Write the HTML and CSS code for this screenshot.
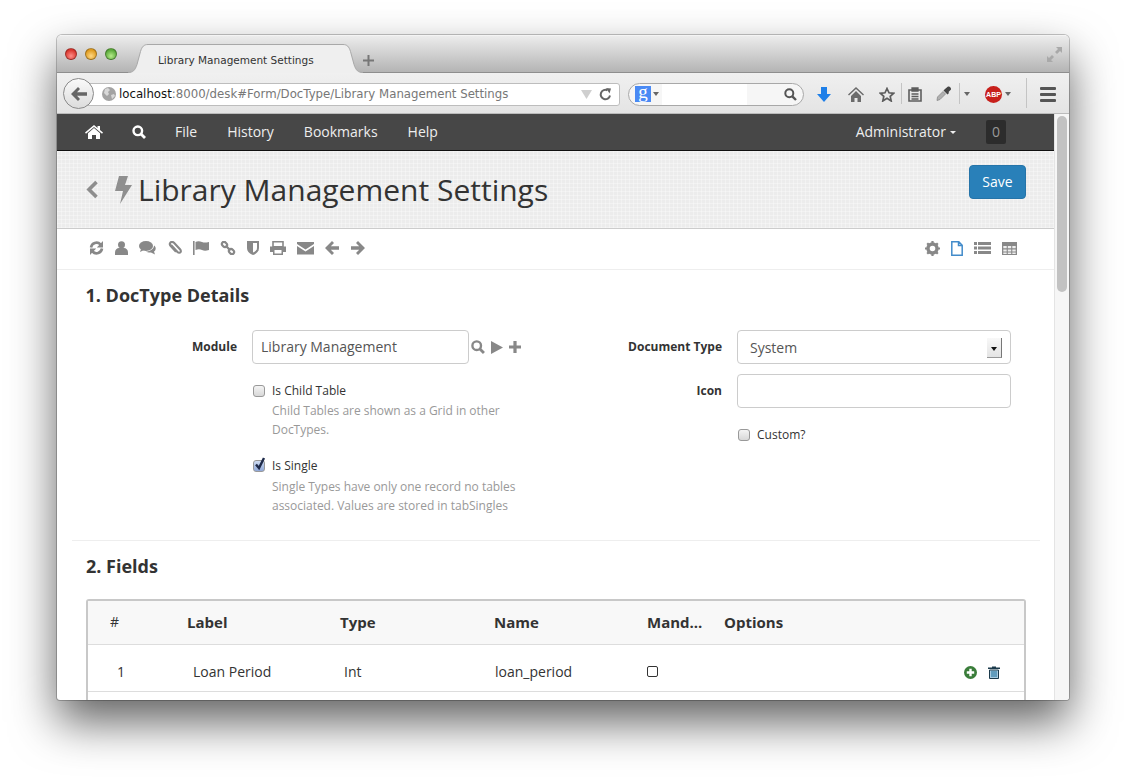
FILE: index.html
```html
<!DOCTYPE html>
<html lang="en">
<head>
  <meta charset="UTF-8">
  <title>Library Management Settings</title>
  <link rel="stylesheet" href="styles.css">
</head>
<body>
<div class="window">

  <div class="titlebar">
    <div class="lights">
      <span class="light red"></span>
      <span class="light yellow"></span>
      <span class="light green"></span>
    </div>
    <div class="tab">
      <svg class="tab-curve" width="20" height="29" viewBox="0 0 20 29"><path d="M0 28.500c5 0 7-2 9-8l3.500-13c1.500-5 3.500-7 7.500-7V29H0z" fill="#efefef"/><path d="M0 28.500c5 0 7-2 9-8l3.500-13c1.500-5 3.500-7 7.500-7" fill="none" stroke="#a8a8a8"/></svg>
      <span class="tab-title">Library Management Settings</span>
      <svg class="tab-curve" width="20" height="29" viewBox="0 0 20 29"><path d="M20 28.500c-5 0-7-2-9-8L7.500 7.500C6 2.500 4 .5 0 .5V29h20z" fill="#efefef"/><path d="M20 28.500c-5 0-7-2-9-8L7.500 7.500C6 2.500 4 .5 0 .5" fill="none" stroke="#a8a8a8"/></svg>
    </div>
    <svg class="tab-plus" width="11" height="11" viewBox="0 0 11 11"><path d="M5.500 0v11M0 5.500h11" stroke="#777" stroke-width="2"/></svg>
    <svg class="expand" width="15" height="15" viewBox="0 0 15 15"><path d="M9 0h6v6l-2-2-3 3-2-2 3-3zM6 15H0V9l2 2 3-3 2 2-3 3z" fill="#a9a9a9"/></svg>
  </div>

  <div class="browserbar">
    <div class="back">
      <svg width="16" height="14" viewBox="0 0 16 14"><path d="M7 0l2 2-3 3.300h10v3.400H6l3 3.300-2 2L0 7z" fill="#666"/></svg>
    </div>
    <div class="urlbar">
      <svg class="globe" width="14" height="14" viewBox="0 0 14 14"><circle cx="7" cy="7" r="7" fill="#a3a3a3"/><path d="M3 2l3-1 2 2-2 2 1 2-2 2-3-3zM9 8l3-1 1 2-3 3z" fill="#d8d8d8"/></svg>
      <span class="url"><b>localhost</b>:8000/desk#Form/DocType/Library Management Settings</span>
      <span class="url-end">
        <svg width="11" height="9" viewBox="0 0 11 9"><path d="M0 0h11L5.500 9z" fill="#cfcfcf"/></svg>
        <svg width="13" height="13" viewBox="0 0 13 13"><path d="M11 7.500A4.700 4.700 0 1 1 8.500 2.300" fill="none" stroke="#666" stroke-width="2"/><path d="M7 0l5 .5-1.500 5z" fill="#666"/></svg>
      </span>
    </div>
    <div class="searchbar">
      <span class="g-icon">g</span>
      <span class="caret"></span>
      <span class="search-blank"></span>
      <svg class="search-mag" width="13" height="13" viewBox="0 0 13 13"><circle cx="5.300" cy="5.300" r="4" fill="none" stroke="#555" stroke-width="2"/><path d="M8.300 8.300L12 12" stroke="#555" stroke-width="2.400"/></svg>
    </div>
    <div class="bar-icons">
      <svg class="i-down" width="14" height="15" viewBox="0 0 14 15"><path d="M4 0h6v7h4l-7 8-7-8h4z" fill="#1e7fe8"/></svg>
      <svg class="i-home" width="16" height="15" viewBox="0 0 16 15"><path d="M8 0L0 7.500l1 1 7-6.500 7 6.500 1-1zM3 9l5-5 5 5v6H9.500v-4h-3v4H3z" fill="#6b6b6b"/></svg>
      <svg class="i-star" width="16" height="15" viewBox="0 0 16 15"><path d="M8 1.500l2 4.300 4.600.5-3.400 3.100 1 4.600L8 11.200l-4.200 2.800 1-4.600-3.400-3.100 4.600-.5z" fill="none" stroke="#5d5d5d" stroke-width="1.700"/></svg>
      <span class="bar-sep s-one"></span>
      <svg class="i-clip" width="14" height="15" viewBox="0 0 14 15"><path d="M1 3h12v11H1z" fill="none" stroke="#5d5d5d" stroke-width="1.600"/><path d="M4 1h6v3H4zM3.500 7h7M3.500 9.500h7M3.500 12h7" stroke="#5d5d5d" stroke-width="1.300" fill="#5d5d5d"/></svg>
      <svg class="i-drop" width="17" height="15" viewBox="0 0 17 15"><path d="M1 14.500l.5-3.500L7 5.500 9.500 8 4 13.500z" fill="#b0b0b0" stroke="#8a8a8a" stroke-width=".8"/><path d="M9 3l3-2.500c1.500-.5 3.500 1 3 3L12.500 6l.5 1-1.500 1.500L7.500 4.500 9 3z" fill="#444"/></svg>
      <span class="bar-sep s-two"></span>
      <span class="caret c-one"></span>
      <span class="abp">ABP</span>
      <span class="caret c-two"></span>
      <span class="bar-sep s-three"></span>
      <span class="burger"><i></i><i></i><i></i></span>
    </div>
  </div>

  <div class="viewport">
    <div class="page">

      <nav class="navbar">
        <svg class="nav-home" width="18" height="14" viewBox="0 0 18 14"><path d="M9 0L0 7.500l1 1.200L9 2l8 6.700 1-1.200-3-2.500V1h-2.500v1.900zM3 8.300L9 3l6 5.300V14h-4v-4H7v4H3z" fill="#fff"/></svg>
        <svg class="nav-search" width="14" height="14" viewBox="0 0 14 14"><circle cx="5.800" cy="5.800" r="4.300" fill="none" stroke="#fff" stroke-width="2.400"/><path d="M9 9l4 4" stroke="#fff" stroke-width="2.800"/></svg>
        <a class="nav-link">File</a>
        <a class="nav-link">History</a>
        <a class="nav-link">Bookmarks</a>
        <a class="nav-link">Help</a>
        <span class="nav-user">Administrator<span class="nav-caret"></span></span>
        <span class="nav-count">0</span>
      </nav>

      <header class="page-head">
        <svg class="head-back" width="13" height="19" viewBox="0 0 13 19"><path d="M10.500 2L3 9.500l7.500 7.500" fill="none" stroke="#8d8d8d" stroke-width="3.600"/></svg>
        <svg class="head-bolt" width="17" height="28" viewBox="0 0 17 28"><path d="M4 0h9l-3 9h7L5 28l3-13H0z" fill="#8f8f8f"/></svg>
        <h1>Library Management Settings</h1>
        <button class="btn-save">Save</button>
      </header>

      <div class="tools">
        <div class="tool-group">
          <svg width="15" height="14" viewBox="0 0 15 14"><path d="M2 6.500A5.500 5.500 0 0 1 11.500 3.500M13 7.500A5.500 5.500 0 0 1 3.500 10.500" fill="none" stroke="#888" stroke-width="2.600"/><path d="M14 0v6.500H7.800zM1 14V7.500h6.200z" fill="#888"/></svg>
          <svg width="13" height="14" viewBox="0 0 13 14"><circle cx="6.500" cy="3.800" r="3.500" fill="#888"/><path d="M0 14v-2.500C0 8.500 2 7 4 7h5c2 0 4 1.500 4 4.500V14z" fill="#888"/></svg>
          <svg width="17" height="14" viewBox="0 0 17 14"><ellipse cx="7" cy="5" rx="7" ry="5" fill="#888"/><path d="M2 8l-1 3 4-2z" fill="#888"/><path d="M15 4.500c2 1 2.500 4.500 0 6l1 3-4-2c-2 .2-4-.3-5-1 4 0 8-2.500 8-6z" fill="#888"/></svg>
          <svg width="15" height="14" viewBox="0 0 15 14"><path d="M4 4l6.500 7c1 1 2.500 1 3 .2.700-1 .3-2-.5-3L7 1.800C6 .8 4.500.6 3.500 1.500c-.9 1-.8 2.300 0 3.200l5.500 6" fill="none" stroke="#888" stroke-width="2.100"/></svg>
          <svg width="16" height="14" viewBox="0 0 16 14"><path d="M0 0h1.600v14H0z" fill="#888"/><path d="M2.500 1c2-1 4-1 6.500 0s4 .5 7 0v8c-3 1-5 1-7 0s-4-1-6.500 0z" fill="#888"/></svg>
          <svg width="16" height="14" viewBox="0 0 16 14"><path d="M2.500 1.500a2 2 0 0 1 3 0l1 1a2 2 0 0 1 0 3 2 2 0 0 1-3 0l-1-1a2 2 0 0 1 0-3zM9.500 8.500a2 2 0 0 1 3 0l1 1a2 2 0 0 1 0 3 2 2 0 0 1-3 0l-1-1a2 2 0 0 1 0-3zM5.500 4.500l5 5" fill="none" stroke="#888" stroke-width="2.300"/></svg>
          <svg width="12" height="14" viewBox="0 0 12 14"><path d="M0 0h12v7c0 3.500-3 6-6 7-3-1-6-3.500-6-7z" fill="#888"/><path d="M6 2h4v5c0 2-2 3.700-4 4.600z" fill="#fff"/></svg>
          <svg width="16" height="14" viewBox="0 0 16 14"><path d="M3 .8h10v5H3z" fill="none" stroke="#888" stroke-width="1.600"/><path d="M0 5.500h16V11h-3v3H3v-3H0z" fill="#888"/><path d="M4.500 9h7v3.500h-7z" fill="#fff"/></svg>
          <svg width="17" height="14" viewBox="0 0 17 14"><path d="M0 1h17v2L8.500 8.500 0 3zM0 5l8.500 5.500L17 5v8.500H0z" fill="#888"/></svg>
          <svg width="14" height="14" viewBox="0 0 14 14"><path d="M7 0l2 2-3.200 3.300H14v3.400H5.800L9 12l-2 2-7-7z" fill="#888"/></svg>
          <svg width="15" height="14" viewBox="0 0 15 14"><path d="M8 0L6 2l3.200 3.300H1v3.400h8.200L6 12l2 2 7-7z" fill="#888"/></svg>
        </div>
        <div class="tool-group right">
          <svg width="15" height="15" viewBox="0 0 15 15"><circle cx="7.500" cy="7.500" r="4.500" fill="none" stroke="#888" stroke-width="3.400"/><path d="M7.500 0v15M0 7.500h15M2.200 2.200l10.600 10.600M12.800 2.200L2.200 12.800" stroke="#888" stroke-width="2.200" stroke-dasharray="2.400 10.200"/></svg>
          <svg width="12" height="15" viewBox="0 0 12 15"><path d="M.8.800h7l3.400 3.400v10H.8zM7.500 1v3.500H11" fill="none" stroke="#428bca" stroke-width="1.500"/></svg>
          <svg width="17" height="15" viewBox="0 0 17 15"><path d="M0 1h3v3H0zM4 1h13v3H4zM0 5.500h3v3H0zM4 5.500h13v3H4zM0 10h3v3H0zM4 10h13v3H4z" fill="#888"/></svg>
          <svg width="15" height="15" viewBox="0 0 15 15"><path d="M0 1h15v13H0z" fill="#888"/><path d="M1.300 5h3.400v2.300H1.300zM5.800 5h3.400v2.300H5.800zM10.300 5h3.400v2.300h-3.400zM1.300 8.500h3.400v2H1.300zM5.800 8.500h3.400v2H5.800zM10.300 8.500h3.400v2h-3.400zM1.300 11.500h3.400v1.500H1.300zM5.800 11.500h3.400v1.500H5.800zM10.300 11.500h3.400v1.500h-3.400z" fill="#eee"/></svg>
        </div>
      </div>

      <section class="section details">
        <h3>1. DocType Details</h3>
        <div class="form-cols">
          <div class="form-col">
            <div class="form-row">
              <label class="form-label">Module</label>
              <div class="link-field">
                <input class="form-input module" type="text" value="Library Management">
                <svg width="14" height="14" viewBox="0 0 13 13"><circle cx="5.300" cy="5.300" r="4" fill="none" stroke="#888" stroke-width="2.200"/><path d="M8.300 8.300L12 12" stroke="#888" stroke-width="2.600"/></svg>
                <svg width="12" height="13" viewBox="0 0 12 13"><path d="M0 0l12 6.500L0 13z" fill="#888"/></svg>
                <svg width="12" height="12" viewBox="0 0 12 12"><path d="M4.400 0h3.200v4.400H12v3.200H7.600V12H4.400V7.600H0V4.400h4.400z" fill="#888"/></svg>
              </div>
            </div>
            <div class="check-block first">
              <div class="check-line"><span class="cb"></span>Is Child Table</div>
              <p class="help">Child Tables are shown as a Grid in other DocTypes.</p>
            </div>
            <div class="check-block single">
              <div class="check-line"><span class="cb on"><svg width="14" height="15" viewBox="0 0 14 15"><path d="M3 7.500l3 3.500 5-10" fill="none" stroke="#1e2a4a" stroke-width="2.400"/></svg></span>Is Single</div>
              <p class="help">Single Types have only one record no tables associated. Values are stored in tabSingles</p>
            </div>
          </div>
          <div class="form-col">
            <div class="form-row">
              <label class="form-label">Document Type</label>
              <div class="form-input select">System<span class="sel-arrow"></span></div>
            </div>
            <div class="form-row next">
              <label class="form-label">Icon</label>
              <input class="form-input wide" type="text">
            </div>
            <div class="check-block custom">
              <div class="check-line"><span class="cb"></span>Custom?</div>
            </div>
          </div>
        </div>
      </section>

      <section class="section fields">
        <h3>2. Fields</h3>
        <div class="grid-table">
          <div class="grid-row grid-head">
            <div class="col-num">#</div>
            <div>Label</div>
            <div>Type</div>
            <div>Name</div>
            <div>Mand...</div>
            <div>Options</div>
          </div>
          <div class="grid-row grid-data">
            <div class="col-num">1</div>
            <div class="in-label">Loan Period</div>
            <div class="in-type">Int</div>
            <div class="in-name">loan_period</div>
            <div><span class="mini-check"></span></div>
            <div class="row-actions">
              <svg width="13" height="13" viewBox="0 0 13 13"><circle cx="6.500" cy="6.500" r="6.500" fill="#3a7d3a"/><path d="M5.300 2.800h2.400v2.500h2.500v2.400H7.700v2.500H5.300V7.700H2.800V5.300h2.500z" fill="#fff"/></svg>
              <svg width="12" height="13" viewBox="0 0 12 13"><path d="M4 1.500V.5h4v1h4v1.500H0V1.500z" fill="#1b3a4b"/><path d="M1.500 4h9v8.500h-9z" fill="#a9cbe0" stroke="#1b3a4b"/><path d="M4 5v6M6 5v6M8 5v6" stroke="#1b6f9a"/></svg>
            </div>
          </div>
          <div class="grid-row grid-data"></div>
        </div>
      </section>
    </div>

    <div class="scrollbar"><span class="thumb"></span></div>
  </div>
</div>
</body>
</html>
```

FILE: styles.css
```css
* { box-sizing: border-box; }
html, body { height: 100%; }
body { margin: 0; padding: 35px 0 0 57px; background: #fff; overflow: hidden; font-family: "Open Sans", Arial, sans-serif; color: #333; }

.window { width: 1012px; height: 665px; border-radius: 5px 5px 3px 3px; overflow: hidden; display: flex; flex-direction: column; background: #fff; box-shadow: 0 22px 46px rgba(0,0,0,0.62), 0 0 0 1px rgba(0,0,0,0.22); }

/* browser chrome */
.titlebar { height: 38px; flex: none; position: relative; display: flex; align-items: flex-end; background: linear-gradient(#ececec, #b4b4b4); border-top: 1px solid #f4f4f4; border-bottom: 1px solid #8e8e8e; }
.lights { position: absolute; left: 8px; top: 12px; display: flex; gap: 8px; }
.light { width: 12px; height: 12px; border-radius: 50%; border: 1px solid rgba(0,0,0,0.3); }
.light.red { background: radial-gradient(circle at 50% 70%, #ff8f8a, #d9362e 70%); }
.light.yellow { background: radial-gradient(circle at 50% 70%, #ffd884, #df9b1f 70%); }
.light.green { background: radial-gradient(circle at 50% 70%, #b6ec8a, #5aa93a 70%); }
.tab { margin-left: 71px; height: 29px; display: flex; margin-bottom: -1px; }
.tab-curve { display: block; }
.tab-title { width: 195px; padding: 9px 0 0 10px; font: 10.500px "DejaVu Sans", sans-serif; color: #333; background: #efefef; border-top: 1px solid #a8a8a8; white-space: nowrap; }
.tab-plus { position: absolute; left: 306px; top: 19px; }
.expand { position: absolute; right: 7px; top: 11px; }

.browserbar { height: 41px; flex: none; position: relative; display: flex; align-items: center; background: linear-gradient(#f0f0f0, #e4e4e4); border-bottom: 1px solid #bbb; padding: 2px 0 0 19px; }
.back { position: absolute; left: 6px; top: 5px; width: 31px; height: 31px; border-radius: 50%; border: 1px solid #8a8a8a; background: linear-gradient(#fafafa, #dcdcdc); display: flex; align-items: center; justify-content: center; z-index: 1; }
.urlbar { width: 544px; height: 23px; display: flex; align-items: center; padding-left: 25px; background: #fff; border: 1px solid #bdbdbd; border-radius: 3px; }
.globe { flex: none; margin-right: 3px; }
.url { font: 11.750px "DejaVu Sans", sans-serif; color: #777; white-space: nowrap; }
.url b { font-weight: normal; color: #111; }
.url-end { margin-left: auto; display: flex; align-items: center; gap: 7px; padding-right: 7px; }
.searchbar { width: 176px; height: 23px; margin-left: 8px; display: flex; align-items: center; padding-left: 6px; background: #f6f6f6; border: 1px solid #a8a8a8; border-radius: 12px; }
.g-icon { width: 16px; height: 16px; background: #4a8af4; color: #fff; font: 19px/12px "Liberation Serif", serif; text-align: center; }
.caret { width: 0; height: 0; border-left: 3.500px solid transparent; border-right: 3.500px solid transparent; border-top: 4px solid #666; }
.searchbar .caret { margin-left: 2px; }
.search-blank { width: 85px; height: 21px; margin-left: 3px; background: #fff; }
.search-mag { margin-left: auto; margin-right: 6px; }
.bar-icons { position: relative; flex: 1; height: 100%; }
.bar-icons > * { position: absolute; }
.i-down { left: 13px; top: 12px; }
.i-home { left: 44px; top: 12px; }
.i-star { left: 75px; top: 12px; }
.bar-sep { top: 8px; width: 1px; height: 21px; background: #c4c4c4; }
.s-one { left: 97px; }
.i-clip { left: 104px; top: 12px; }
.i-drop { left: 132px; top: 11px; }
.s-two { left: 155px; }
.c-one { left: 160px; top: 17px; }
.abp { left: 181px; top: 11px; width: 17px; height: 17px; border-radius: 50%; background: #c8201c; color: #fff; font: bold 7px/17px "Liberation Sans", sans-serif; text-align: center; }
.c-two { left: 201px; top: 17px; }
.s-three { left: 222px; top: 3px; height: 30px; }
.burger { left: 236px; top: 12px; display: flex; flex-direction: column; gap: 3px; }
.burger i { display: block; width: 16px; height: 3px; background: #555; border-radius: 1px; }

.viewport { flex: 1; min-height: 0; display: flex; }
.page { flex: 1; min-width: 0; overflow: hidden; }
.scrollbar { width: 15px; flex: none; background: #f6f6f6; border-left: 1px solid #e4e4e4; padding: 2px 2px 0 2px; }
.thumb { display: block; height: 176px; background: #c2c2c2; border-radius: 5px; }

/* app navbar */
.navbar { height: 37px; display: flex; align-items: center; background: #474747; border-bottom: 1px solid #111; padding-left: 28px; color: #fff; font-size: 14px; }
.nav-search { margin-left: 29px; }
.nav-link { margin: -2px 0 0 30px; color: #eee; }
.nav-search + .nav-link { margin-left: 29px; }
.nav-user { margin: -2px 0 0 auto; color: #eee; display: flex; align-items: center; }
.nav-caret { width: 0; height: 0; margin-left: 4px; margin-top: 2px; border-left: 3px solid transparent; border-right: 3px solid transparent; border-top: 3px solid #eee; }
.nav-count { width: 20px; height: 24px; margin: 0 48px 0 30px; background: #2c2c2c; border-radius: 2px; color: #999; text-align: center; line-height: 24px; }

.page-head { height: 78px; display: flex; align-items: center; padding: 0 28px 0 29px; background-color: #ececec; background-image: repeating-linear-gradient(0deg, rgba(255,255,255,0.3) 0 1px, transparent 1px 4px), repeating-linear-gradient(90deg, rgba(255,255,255,0.3) 0 1px, transparent 1px 4px); border-bottom: 1px solid #ccc; }
.head-bolt { margin-left: 16px; }
.page-head h1 { margin: 0 0 0 6px; font-size: 30px; font-weight: 400; color: #333; white-space: nowrap; }
.btn-save { margin: -15px 0 0 auto; width: 57px; height: 34px; padding: 0 0 2px; background: #2980b9; border: 1px solid #2574a9; border-radius: 4px; color: #fff; font: 14px "Open Sans", sans-serif; }

.tools { height: 41px; display: flex; align-items: center; padding: 0 37px 2px 32px; border-bottom: 1px solid #eee; }
.tool-group { display: flex; align-items: center; gap: 11px; }
.tool-group.right { margin-left: auto; }

/* form */
.section { padding-left: 29px; }
.section h3 { margin: 0; font-size: 18px; font-weight: 700; color: #333; line-height: 24px; }
.details { height: 271px; margin: 0 14px 0 15px; padding: 13px 0 0 14px; border-bottom: 1px solid #eee; }
.details h3 { margin-left: -0.500px; }
.form-cols { display: flex; margin-top: 23px; }
.form-col { flex: none; width: 485px; }
.form-row { display: flex; align-items: center; gap: 15px; }
.form-row.next { margin-top: 10px; }
.form-label { width: 151px; margin-top: -2px; text-align: right; font-size: 12px; font-weight: 700; color: #333; }
.form-input { height: 34px; border: 1px solid #ccc; border-radius: 4px; background: #fff; font: 14px "Open Sans", sans-serif; color: #555; padding: 0 8px; }
.form-input.module { width: 217px; padding-bottom: 2px; }
.form-input.wide { width: 274px; }
.link-field { display: flex; align-items: center; gap: 6px; }
.link-field .form-input { margin-right: -4px; }
.form-input.select { width: 274px; display: flex; align-items: center; padding: 1px 8px 0 12px; }
.sel-arrow { position: relative; margin-left: auto; width: 15px; height: 20px; background: linear-gradient(#f8f8f8, #e4e4e4); border-right: 1px solid #777; border-bottom: 1px solid #999; }
.sel-arrow::after { content: ""; position: absolute; left: 4px; top: 9px; border-left: 3px solid transparent; border-right: 3px solid transparent; border-top: 4px solid #111; }

.check-block { margin-left: 166px; }
.check-block.first { margin-top: 18px; }
.check-block.single { margin-top: 18px; }
.check-block.single .help { margin-top: 3px; }
.check-block.custom { margin-top: 18px; }
.check-line { display: flex; align-items: center; gap: 7px; height: 17px; font-size: 12px; color: #333; }
.cb { position: relative; flex: none; width: 12px; height: 12px; margin-left: 1px; border: 1px solid #999; border-radius: 3px; background: linear-gradient(#f4f4f4, #d8d8d8); }
.cb.on { background: linear-gradient(#cfdcf2, #8fa8d8); }
.cb svg { position: absolute; left: -1px; top: -4px; }
.help { margin: 2px 0 0 20px; width: 254px; font-size: 12px; line-height: 19px; color: #999; letter-spacing: -0.020px; }

.fields { padding-top: 13px; }
.grid-table { width: 940px; margin: 21px 0 0; border: 2px solid #c8c8c8; border-radius: 3px; font-size: 14px; }
.grid-row { display: grid; grid-template-columns: 99px 153px 154px 153px 77px 1fr; align-items: center; border-bottom: 1px solid #ddd; }
.grid-head { height: 44px; padding-bottom: 2px; background: #f8f8f8; font-size: 15px; font-weight: 700; }
.grid-data { height: 47px; padding-top: 6px; }
.col-num { padding-left: 22px; }
.grid-data .col-num { padding-left: 29px; }
.grid-head .col-num { font-weight: 400; font-size: 14px; }
.in-label { padding-left: 6px; }
.in-type { padding-left: 4px; }
.in-name { padding-left: 1px; }
.mini-check { display: block; width: 11px; height: 11px; margin-top: 1px; border: 1.500px solid #333; border-radius: 2px; }
.row-actions { display: flex; justify-content: flex-end; align-items: center; gap: 11px; padding-right: 24px; margin-top: 2px; }
```
